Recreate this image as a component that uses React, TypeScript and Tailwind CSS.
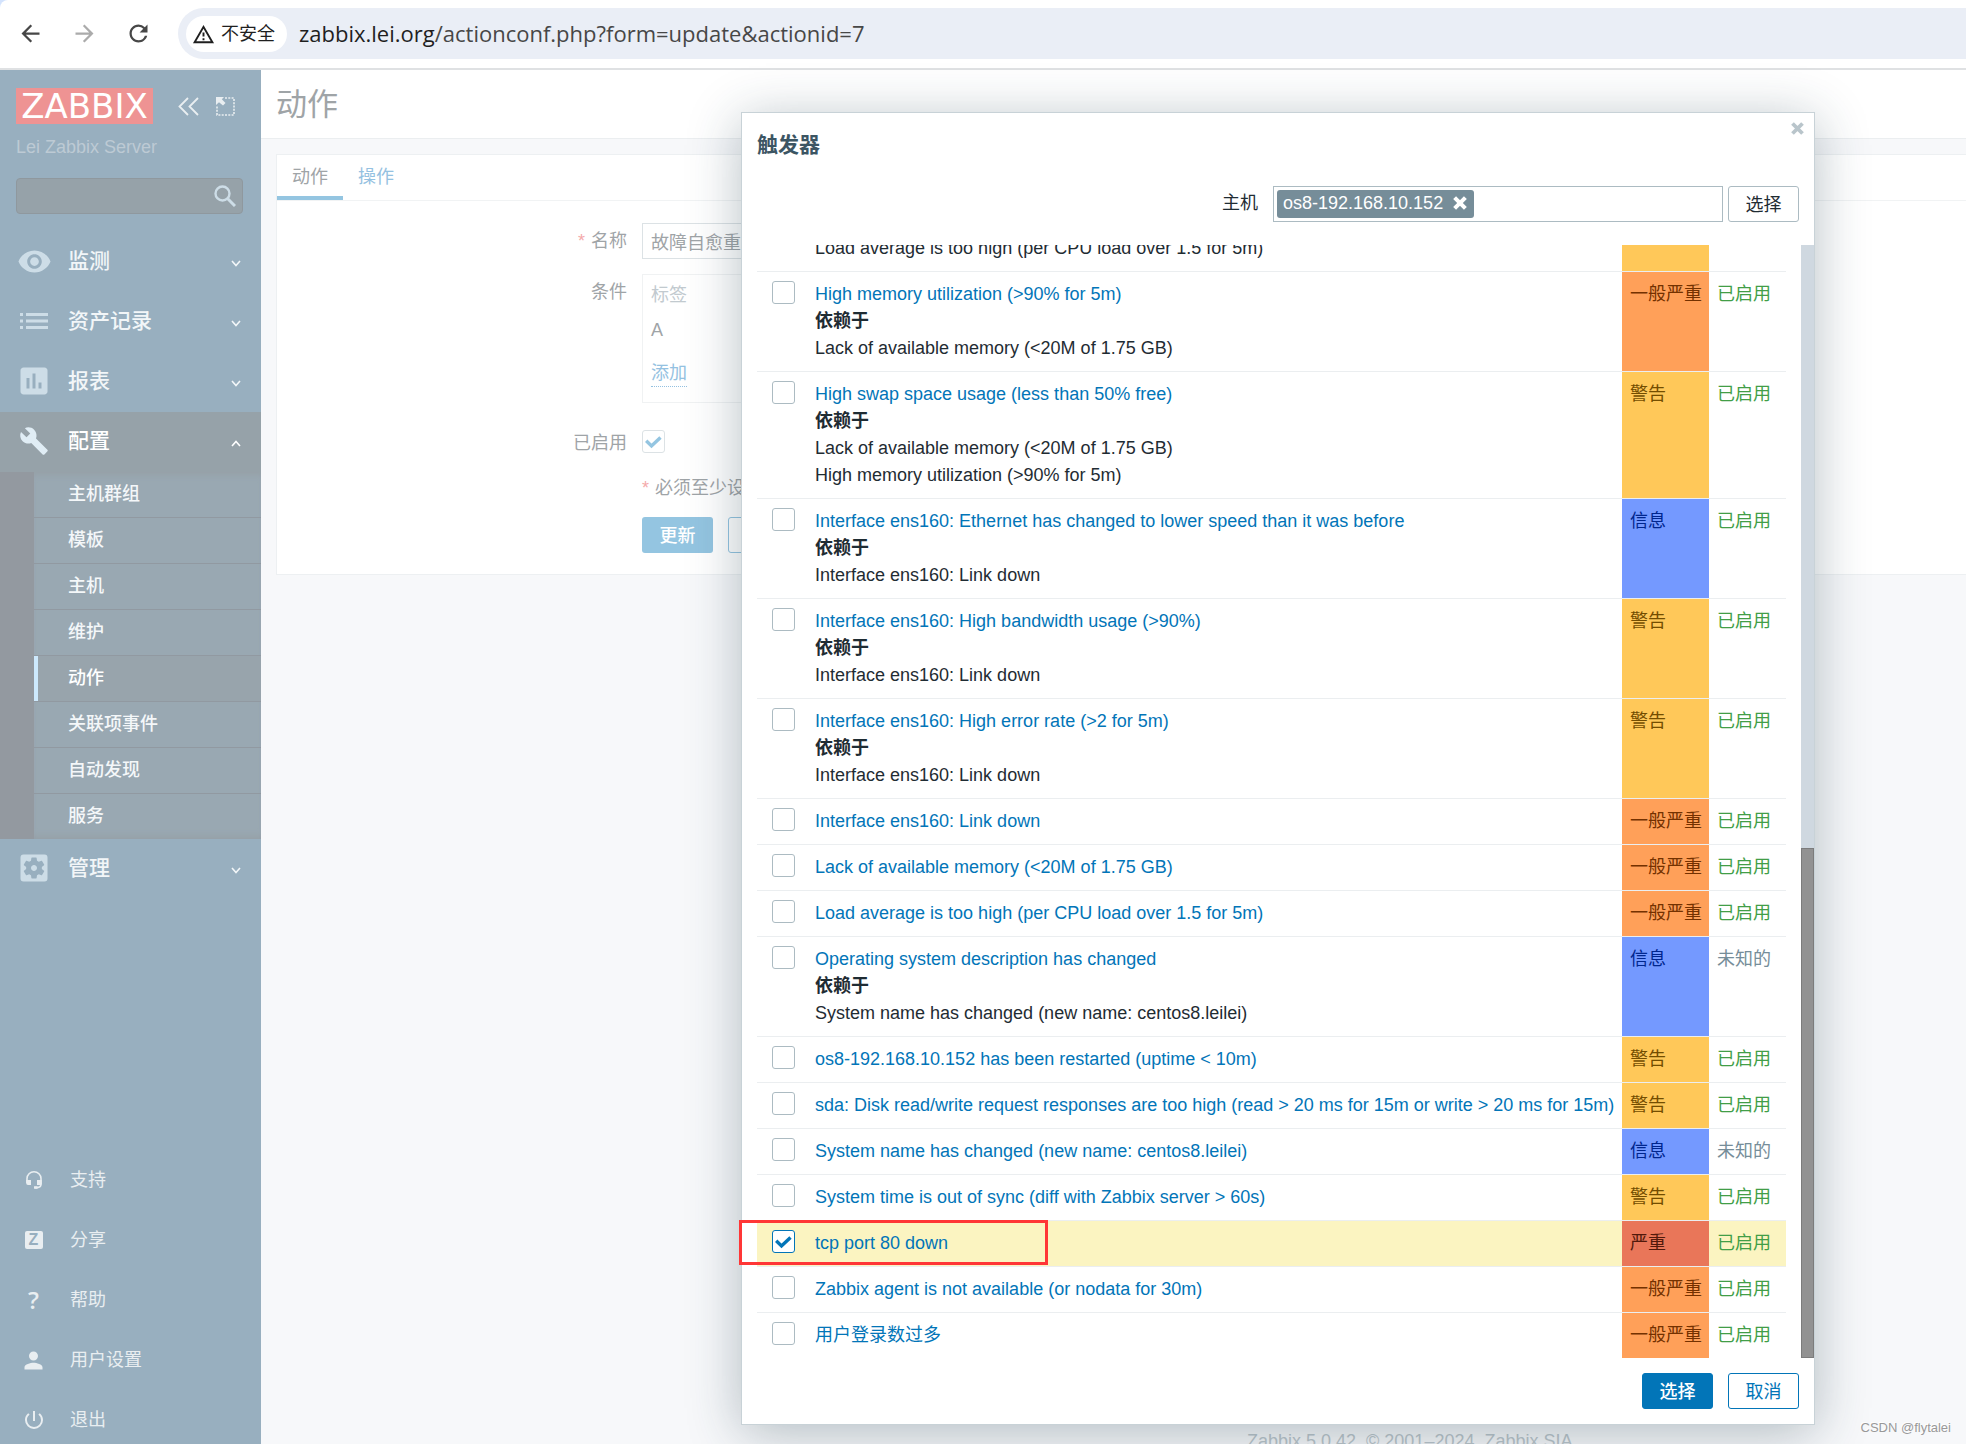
import type { ReactNode } from 'react'
import {
  MdArrowBack,
  MdArrowForward,
  MdAssessment,
  MdBuild,
  MdOutlineWarningAmber,
  MdPerson,
  MdPowerSettingsNew,
  MdRefresh,
  MdSettingsApplications,
  MdVisibility,
} from 'react-icons/md'

type Level = 'info' | 'warning' | 'average' | 'high'

type Trigger = {
  name: string
  level: Level
  deps?: string[]
  unknown?: boolean
  checked?: boolean
}

const levels: Record<Level, { label: string; cls: string }> = {
  info: { label: '信息', cls: 'bg-[#7499ff] text-[#00268e]' },
  warning: { label: '警告', cls: 'bg-[#ffc859] text-[#734d00]' },
  average: { label: '一般严重', cls: 'bg-[#ffa059] text-[#733100]' },
  high: { label: '严重', cls: 'bg-[#e97659] text-[#52190b]' },
}

const triggers: Trigger[] = [
  {
    name: 'High CPU utilization (over 90% for 5m)',
    level: 'warning',
    deps: ['Load average is too high (per CPU load over 1.5 for 5m)'],
  },
  {
    name: 'High memory utilization (>90% for 5m)',
    level: 'average',
    deps: ['Lack of available memory (<20M of 1.75 GB)'],
  },
  {
    name: 'High swap space usage (less than 50% free)',
    level: 'warning',
    deps: ['Lack of available memory (<20M of 1.75 GB)', 'High memory utilization (>90% for 5m)'],
  },
  {
    name: 'Interface ens160: Ethernet has changed to lower speed than it was before',
    level: 'info',
    deps: ['Interface ens160: Link down'],
  },
  { name: 'Interface ens160: High bandwidth usage (>90%)', level: 'warning', deps: ['Interface ens160: Link down'] },
  { name: 'Interface ens160: High error rate (>2 for 5m)', level: 'warning', deps: ['Interface ens160: Link down'] },
  { name: 'Interface ens160: Link down', level: 'average' },
  { name: 'Lack of available memory (<20M of 1.75 GB)', level: 'average' },
  { name: 'Load average is too high (per CPU load over 1.5 for 5m)', level: 'average' },
  {
    name: 'Operating system description has changed',
    level: 'info',
    deps: ['System name has changed (new name: centos8.leilei)'],
    unknown: true,
  },
  { name: 'os8-192.168.10.152 has been restarted (uptime < 10m)', level: 'warning' },
  {
    name: 'sda: Disk read/write request responses are too high (read > 20 ms for 15m or write > 20 ms for 15m)',
    level: 'warning',
  },
  { name: 'System name has changed (new name: centos8.leilei)', level: 'info', unknown: true },
  { name: 'System time is out of sync (diff with Zabbix server > 60s)', level: 'warning' },
  { name: 'tcp port 80 down', level: 'high', checked: true },
  { name: 'Zabbix agent is not available (or nodata for 30m)', level: 'average' },
  { name: '用户登录数过多', level: 'average' },
]

const subMenu = ['主机群组', '模板', '主机', '维护', '动作', '关联项事件', '自动发现', '服务']

function ListIcon() {
  return (
    <svg width="28" height="16" viewBox="0 0 28 16" fill="currentColor">
      <path d="M0 0h3v3H0zM6 0h22v3H6zM0 6.500h3v3H0zM6 6.500h22v3H6zM0 13h3v3H0zM6 13h22v3H6z" />
    </svg>
  )
}

function HeadsetIcon() {
  return (
    <svg width="18" height="18" viewBox="0 0 18 18">
      <path d="M2 12V7.500a7 6.700 0 0 1 14 0V13c0 2.500-1.500 3.600-4 3.600H10" fill="none" stroke="currentColor" strokeWidth="1.600" />
      <path d="M1.200 9H6v5H3a1.800 1.800 0 0 1-1.800-1.800zM12 9h4.800v4a1.500 1.500 0 0 1-1.500 1H12zM9 15.200h3.500v2.600H9z" fill="currentColor" />
    </svg>
  )
}

function Chevron({ up }: { up?: boolean }) {
  return (
    <svg className="ml-auto mt-1" width="10" height="7" viewBox="0 0 10 7" fill="none" stroke="currentColor" strokeWidth="1.600">
      <path d={up ? 'M1 6l4-4.500L9 6' : 'M1 1l4 4.500L9 1'} />
    </svg>
  )
}

function Cross({ size }: { size: number }) {
  return (
    <svg width={size} height={size} viewBox="0 0 13 13" stroke="currentColor" strokeWidth="3.800">
      <path d="M1.500 1.500l10 10M11.500 1.500l-10 10" />
    </svg>
  )
}

function Checkbox({ id, label, checked, muted }: { id: string; label?: string; checked?: boolean; muted?: boolean }) {
  return (
    <span className="grid size-[23px] shrink-0">
      <input
        type="checkbox"
        id={id}
        aria-label={label}
        defaultChecked={checked}
        className={`peer col-start-1 row-start-1 size-[23px] appearance-none rounded-[3px] border bg-white ${
          muted ? 'border-[#dce2e5]' : 'border-[#acbbc2] checked:border-[#0275b8]'
        }`}
      />
      <svg
        className={`pointer-events-none invisible col-start-1 row-start-1 peer-checked:visible ${muted ? 'text-[#94c5e1]' : 'text-[#0275b8]'}`}
        viewBox="0 0 23 23"
        fill="none"
        stroke="currentColor"
        strokeWidth="3.400"
      >
        <path d="M4.200 10.800l5.300 5.200 9-8.600" />
      </svg>
    </span>
  )
}

function MenuItem({ icon, text, open }: { icon: ReactNode; text: string; open?: boolean }) {
  return (
    <button
      className={`flex h-15 w-full items-center pr-5 pb-0.5 text-[21px] font-medium ${
        open ? 'bg-[#96a2a9] text-white' : 'text-[#f2f6f8]'
      }`}
    >
      <span className={`flex w-[68px] justify-center ${open ? 'text-[#e0edf5]' : 'text-[#cddde7]'}`}>{icon}</span>
      {text}
      <Chevron up={open} />
    </button>
  )
}

function FootItem({ icon, text }: { icon: ReactNode; text: string }) {
  return (
    <a href="#" className="flex h-6 items-center text-[18px]">
      <span className="flex w-[70px] justify-center pr-[3px]">{icon}</span>
      {text}
    </a>
  )
}

function AddressBar() {
  return (
    <div className="bg-[#d3e3fd]">
      <div className="flex h-[70px] items-center rounded-tl-lg border-b-2 border-[#dfe1e3] bg-white pb-px pl-[17px] text-[#474747]">
        <button aria-label="后退">
          <MdArrowBack size={27} />
        </button>
        <button aria-label="前进" className="ml-[27px] text-[#ababab]">
          <MdArrowForward size={27} />
        </button>
        <button aria-label="刷新" className="ml-[27px]">
          <MdRefresh size={27} />
        </button>
        <div className="ml-[26px] flex h-[51px] flex-1 items-center rounded-l-full bg-[#eaeef6] pl-2">
          <button className="flex h-9 items-center gap-1.5 rounded-full bg-white pt-0.5 pr-3 pl-1.5 text-[18px] text-[#1f1f1f]">
            <MdOutlineWarningAmber size={23} />
            不安全
          </button>
          <div className="ml-3 font-['Open_Sans','Noto_Sans',sans-serif] text-[22px] text-[#474747]">
            <span className="text-[#1f1f1f]">zabbix.lei.org</span>/actionconf.php?form=update&amp;actionid=7
          </div>
        </div>
      </div>
    </div>
  )
}

function SideBar() {
  return (
    <aside className="flex w-[261px] shrink-0 flex-col overflow-hidden bg-[#98afbf] pt-[18px] text-[#e9eef1]">
      {/* logo */}
      <div className="flex items-center pl-4">
        <a
          href="#"
          className="flex h-9 w-[137px] items-center justify-center bg-[#ee9393] font-['DejaVu_Sans',sans-serif] text-[34px] leading-9 text-white"
        >
          ZABBIX
        </a>
        <button aria-label="收起" className="ml-[25px]">
          <svg width="21" height="19" viewBox="0 0 21 19" fill="none" stroke="currentColor" strokeWidth="1.800">
            <path d="M10 1L1.500 9.500 10 18M20 1l-8.500 8.500L20 18" />
          </svg>
        </button>
        <button aria-label="隐藏" className="ml-[17px]">
          <svg width="19" height="19" viewBox="0 0 19 19">
            <path d="M9 1h9v17H1V9" fill="none" stroke="currentColor" strokeWidth="1.600" strokeDasharray="2 1.300" />
            <path d="M0 0h8L5.800 2.300 9.500 6 7 8.500 3 5.200 0 8z" fill="currentColor" />
          </svg>
        </button>
      </div>
      <div className="mt-2.5 pl-4 text-[18px] leading-[27px] text-[#bdcad4]">Lei Zabbix Server</div>

      {/* 搜索 */}
      <div className="mt-[17px] mr-[18px] ml-4 flex h-9 items-center rounded-[4px] border border-[#8f989e] bg-[#96a2a9] pr-1.5">
        <input type="text" aria-label="搜索" className="w-full min-w-0 bg-transparent px-2 outline-none" />
        <button aria-label="搜索" className="text-[#cddde7]">
          <svg width="22" height="22" viewBox="0 0 22 22" fill="none" stroke="currentColor">
            <circle cx="8.500" cy="8.500" r="7" strokeWidth="2.400" />
            <path d="M13.500 13.500l7.500 7.500" strokeWidth="3" />
          </svg>
        </button>
      </div>

      {/* 主菜单 */}
      <nav className="mt-[18px]">
        <MenuItem icon={<MdVisibility size={35} />} text="监测" />
        <MenuItem icon={<ListIcon />} text="资产记录" />
        <MenuItem icon={<MdAssessment size={36} />} text="报表" />
        <MenuItem icon={<MdBuild size={30} />} text="配置" open />
        <div className="bg-[#9399a0] pl-[34px]">
          <ul className="bg-[#99a8b2] shadow-[inset_0_7px_7px_-5px_#969fa5,inset_0_-7px_7px_-5px_#969fa5]">
            {subMenu.map((item) => (
              <li key={item} className="border-b border-[#9199a1] last:border-b-0">
                <a
                  href="#"
                  className={`flex h-[45px] items-center border-l-4 pl-[30px] text-[18px] font-medium ${
                    item === '动作' ? 'border-[#cde9fd] bg-[#98a4ac] text-white' : 'border-transparent text-[#f4f7f9]'
                  }`}
                >
                  {item}
                </a>
              </li>
            ))}
          </ul>
        </div>
        <MenuItem icon={<MdSettingsApplications size={36} />} text="管理" />
      </nav>

      {/* 底部菜单 */}
      <nav className="mt-auto flex flex-col gap-9 pb-3">
        <FootItem icon={<HeadsetIcon />} text="支持" />
        <FootItem
          icon={
            <span className="flex size-[18px] items-center justify-center rounded-[2px] bg-[#e9eef1] text-[16px] leading-4 font-bold text-[#98afbf]">
              Z
            </span>
          }
          text="分享"
        />
        <FootItem icon={<span className="font-['Open_Sans',sans-serif] text-[24px] leading-6 font-semibold">?</span>} text="帮助" />
        <FootItem icon={<MdPerson size={27} />} text="用户设置" />
        <FootItem icon={<MdPowerSettingsNew size={24} />} text="退出" />
      </nav>
    </aside>
  )
}

function ActionForm() {
  return (
    <div className="mt-[15px] ml-[15px] border border-r-0 border-[#edf0f2] bg-white text-[18px] leading-[27px] text-[#9fa4a7]">
      {/* 标签页 */}
      <div className="-mt-px flex border-b border-[#f1f3f4]">
        <button className="h-[46px] border-b-4 border-[#94c5e1] px-[15px] pt-1">动作</button>
        <button className="h-[46px] border-b-4 border-transparent px-[15px] pt-1 text-[#94c1e1]">操作</button>
      </div>

      <form className="grid grid-cols-[350px_680px] gap-x-[15px] pt-[22px] pb-[21px]">
        <label htmlFor="name" className="pt-[5px] text-right">
          <span className="mr-1.5 text-[#f4aaaa]">*</span>名称
        </label>
        <input id="name" type="text" defaultValue="故障自愈重启" className="h-9 border border-[#dce2e5] px-2" />

        <div className="mt-[15px] pt-[5px] text-right">条件</div>
        <div className="mt-[15px] h-[129px] border border-[#f0f2f3] px-2 pt-[7px]">
          <div className="text-[#c2cacf]">标签</div>
          <div className="mt-2">A</div>
          <a href="#" className="mt-4 inline-block border-b border-dotted border-[#94c1e1] leading-[26px] text-[#94c1e1]">
            添加
          </a>
        </div>

        <label htmlFor="enabled" className="mt-[27px] text-right">
          已启用
        </label>
        <div className="mt-[27px]">
          <Checkbox id="enabled" checked muted />
        </div>

        <div className="col-start-2 mt-[18px]">
          <span className="mr-1.5 text-[#f4aaaa]">*</span>必须至少设置一个操作。
        </div>

        <div className="col-start-2 mt-[15px] flex gap-[15px]">
          <button type="button" className="h-9 w-[71px] rounded-[3px] bg-[#94c5e1] pt-0.5 font-medium text-white">
            更新
          </button>
          <button type="button" className="h-9 w-[71px] rounded-[3px] border border-[#94c5e1] pt-0.5 text-[#94c5e1]">
            克隆
          </button>
        </div>
      </form>
    </div>
  )
}

function TriggerRow({ item, index }: { item: Trigger; index: number }) {
  const level = levels[item.level]
  return (
    <tr className={`group align-top ${item.checked ? 'bg-[#fbf4c1]' : ''}`}>
      <td className="w-[58px] border-b border-[#ebeef0] pt-[9px] pl-[15px] group-last:border-b-0">
        <Checkbox id={`trigger-${index}`} label={item.name} checked={item.checked} />
      </td>
      <td className="border-b border-[#ebeef0] py-[9px] whitespace-nowrap group-last:border-b-0">
        <a href="#" className="text-[#0275b8]">
          {item.name}
        </a>
        {item.deps && <div className="font-bold">依赖于</div>}
        {item.deps?.map((dep) => (
          <div key={dep}>{dep}</div>
        ))}
      </td>
      <td className={`w-[87px] border-b border-[#ebeef0] py-[9px] pl-2 whitespace-nowrap group-last:border-b-0 ${level.cls}`}>
        {level.label}
      </td>
      <td className="w-[77px] border-b border-[#ebeef0] py-[9px] pl-2 group-last:border-b-0">
        {item.unknown ? (
          <span className="text-[#768d99]">未知的</span>
        ) : (
          <a href="#" className="text-[#429e47]">
            已启用
          </a>
        )}
      </td>
    </tr>
  )
}

function TriggerDialog() {
  return (
    <div
      role="dialog"
      aria-label="触发器"
      className="absolute top-[112px] right-[151px] bottom-[19px] left-[741px] flex flex-col border border-[#c8d2d7] bg-white text-[18px] leading-[27px] text-[#1f2c33] shadow-[0_8px_50px_rgba(31,60,75,0.32)]"
    >
      {/* 标题 */}
      <div className="flex items-start justify-between pl-[15px]">
        <h4 className="mt-[18px] text-[21px] leading-[27px] font-bold text-[#3c5563]">触发器</h4>
        <button aria-label="关闭" className="mt-[9px] mr-[10px] text-[#b9c5cb]">
          <Cross size={13} />
        </button>
      </div>

      {/* 主机过滤 */}
      <div className="mt-7 flex items-start justify-end pr-[15px]">
        <label htmlFor="host" className="mt-1 mr-[15px]">
          主机
        </label>
        <div className="flex h-9 w-[450px] border border-[#acbbc2] p-[3px]">
          <span className="flex h-7 shrink-0 items-center gap-2.5 rounded-[3px] bg-[#768d99] pr-[7px] pb-0.5 pl-1.5 text-white">
            os8-192.168.10.152
            <button aria-label="移除">
              <Cross size={14} />
            </button>
          </span>
          <input id="host" type="text" className="min-w-0 flex-1 px-1 outline-none" />
        </div>
        <button className="ml-[5px] h-9 w-[71px] rounded-[3px] border border-[#acbbc2] pt-0.5">选择</button>
      </div>

      {/* 触发器列表 */}
      <div className="mt-[23px] flex min-h-0 flex-1">
        <div className="flex flex-1 flex-col justify-end overflow-hidden pr-[15px] pl-[15px]">
          <table className="w-full border-separate border-spacing-0">
            <tbody>
              {triggers.map((item, index) => (
                <TriggerRow key={item.name} item={item} index={index} />
              ))}
            </tbody>
          </table>
        </div>
        <div className="flex w-[13px] flex-col justify-end bg-[#cfd8e0]">
          <div className="h-[510px] border border-[#7c7c7c] bg-[#929292]" />
        </div>
      </div>

      {/* 按钮 */}
      <div className="flex justify-end gap-[15px] p-[15px]">
        <button className="h-9 w-[71px] rounded-[3px] border border-[#0275b8] bg-[#0275b8] pt-0.5 font-medium text-white">选择</button>
        <button className="h-9 w-[71px] rounded-[3px] border border-[#0275b8] pt-0.5 text-[#0275b8]">取消</button>
      </div>

      {/* 红框标注 */}
      <div className="pointer-events-none absolute bottom-[159px] -left-[3px] h-[45px] w-[309px] border-3 border-[#ff3636]" />
    </div>
  )
}

export default function App() {
  return (
    <div className="relative flex h-screen flex-col overflow-hidden bg-[#f7f8fa] font-['Liberation_Sans','Noto_Sans_CJK_SC',sans-serif]">
      <AddressBar />
      <div className="flex min-h-0 flex-1">
        <SideBar />
        <main className="flex min-w-0 flex-1 flex-col overflow-hidden">
          <header className="h-[69px] border-b border-[#ebeef0] bg-white pt-[14px] pl-[15px]">
            <h1 className="text-[31px] leading-[42px] text-[#9fa4a7]">动作</h1>
          </header>
          <ActionForm />
          <footer className="mt-auto h-4 pl-[986px] text-[18px] leading-[27px] whitespace-nowrap text-[#bcc6cb]">
            Zabbix 5.0.42. © 2001–2024, Zabbix SIA
          </footer>
        </main>
      </div>
      <TriggerDialog />
      {/* 水印 */}
      <div className="absolute right-[15px] bottom-[7px] text-[13px] text-[#999999] [text-shadow:-1px_-1px_0_#ffffff]">
        CSDN @flytalei
      </div>
    </div>
  )
}
